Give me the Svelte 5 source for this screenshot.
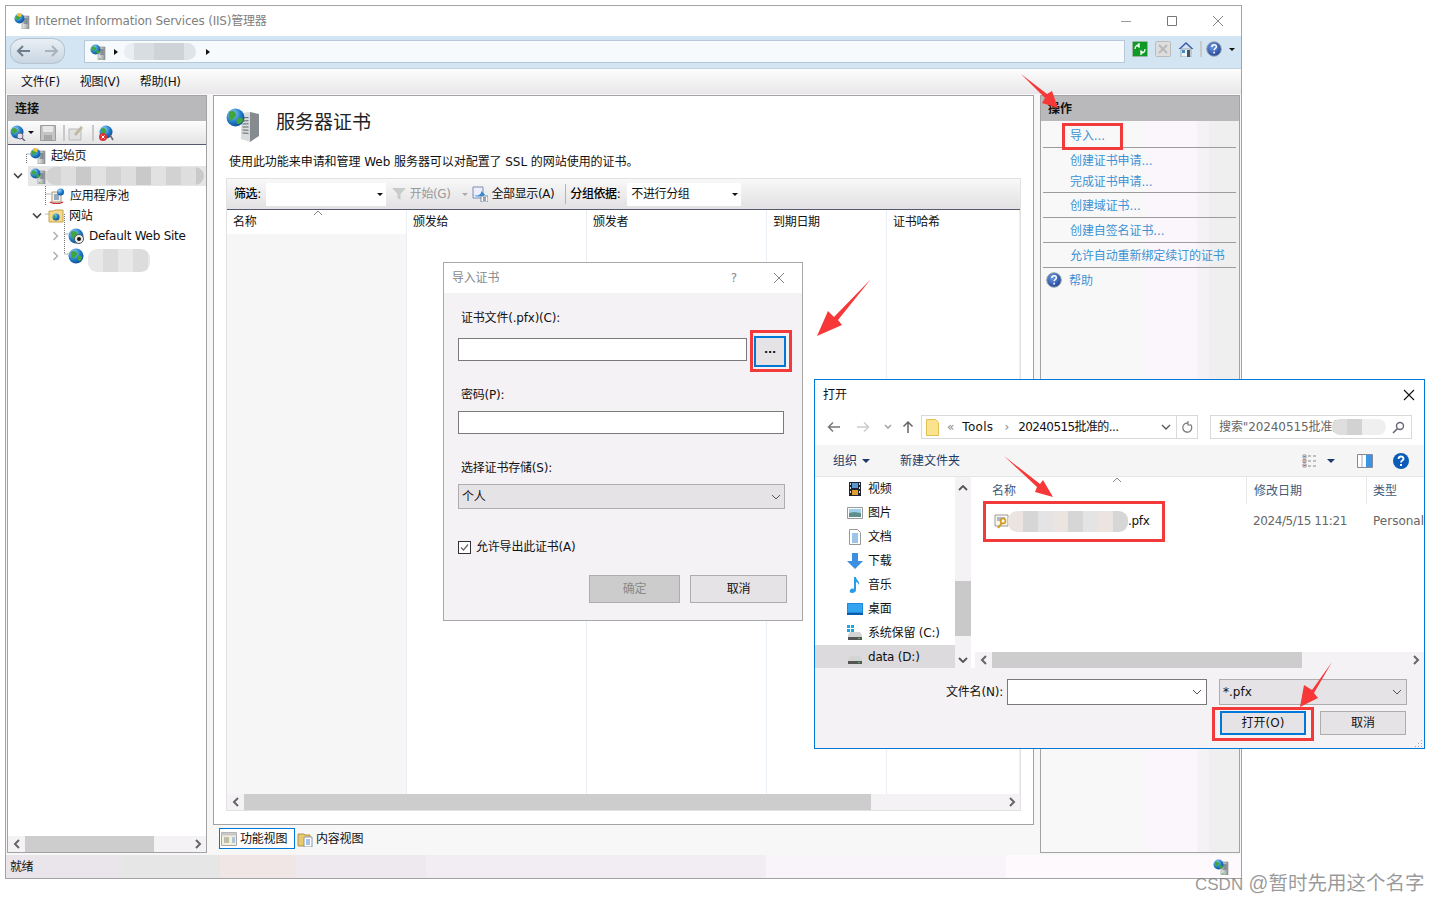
<script>
  const tree = [
    { cls: "l0", icon: "start", label: "起始页" },
    { cls: "l0b", chev: "down", icon: "srv", mask: true, active: true },
    { cls: "l1", icon: "pool", label: "应用程序池" },
    { cls: "l1b", chev: "down", icon: "folder", label: "网站" },
    { cls: "l2", chev: "right", icon: "site", label: "Default Web Site", latin: true },
    { cls: "l2", chev: "right", icon: "globe", mask2: true },
  ];
  const actions = [
    { label: "导入...", cls: "first sep" },
    { label: "创建证书申请...", cls: "second" },
    { label: "完成证书申请...", cls: "third sep" },
    { label: "创建域证书...", cls: "sep" },
    { label: "创建自签名证书...", cls: "sep" },
    { label: "允许自动重新绑定续订的证书", cls: "sep" },
  ];
  const columns = ["名称", "颁发给", "颁发者", "到期日期", "证书哈希"];
  const places = [
    { icon: "video", label: "视频" },
    { icon: "pic", label: "图片" },
    { icon: "doc", label: "文档" },
    { icon: "down", label: "下载" },
    { icon: "music", label: "音乐" },
    { icon: "desk", label: "桌面" },
    { icon: "sysdisk", label: "系统保留 (C:)" },
    { icon: "disk", label: "data (D:)", on: true },
  ];
</script>

{#snippet ic(id, w, h = w)}
  <svg class="ic" width={w} height={h}><use href={"#" + id} /></svg>
{/snippet}

{#snippet chevL()}
  <svg class="ic" width="8" height="10" viewBox="0 0 8 10"><path d="M6 1 2 5l4 4" fill="none" stroke="#666" stroke-width="2" /></svg>
{/snippet}

{#snippet chevR()}
  <svg class="ic" width="8" height="10" viewBox="0 0 8 10"><path d="M2 1l4 4-4 4" fill="none" stroke="#666" stroke-width="2" /></svg>
{/snippet}

{#snippet combo()}
  <svg class="ic" width="10" height="6" viewBox="0 0 10 6"><path d="M1 1l4 4 4-4" fill="none" stroke="#555" stroke-width="1" /></svg>
{/snippet}

<svg class="defs" width="0" height="0">
  <defs>
    <radialGradient id="gb" cx="35%" cy="30%" r="75%"><stop offset="0" stop-color="#9fd4f7" /><stop offset=".6" stop-color="#1f7cc9" /><stop offset="1" stop-color="#0d4c94" /></radialGradient>
    <linearGradient id="gs" x1="0" x2="1"><stop offset="0" stop-color="#eef0f0" /><stop offset="1" stop-color="#8f9598" /></linearGradient>
    <radialGradient id="gh" cx="40%" cy="35%" r="70%"><stop offset="0" stop-color="#6f9be0" /><stop offset="1" stop-color="#1c3f9a" /></radialGradient>
    <symbol id="srv" viewBox="0 0 16 16">
      <path d="M8 3h7v13H8z" fill="url(#gs)" stroke="#888" stroke-width=".6" /><path d="M9.500 6h4M9.500 8h4M9.500 10h4" stroke="#456" stroke-width=".9" /><rect x="9" y="14" width="1.500" height="1.300" fill="#4c4" />
      <circle cx="5.500" cy="5.500" r="5" fill="url(#gb)" /><path d="M2 3c2-1 3 0 4 1s-1 2-2 3-2 0-2-4zM7 6c2 0 3 1 2.500 2.500S8 10 7 9.500 6 7 7 6z" fill="#3fa53c" />
    </symbol>
    <symbol id="bigsrv" viewBox="0 0 34 34">
      <path d="M15 5l9-1v30l-9-3z" fill="#d9dcdc" /><path d="M24 4l9 2v22l-9 6z" fill="#858b8f" />
      <path d="M16.500 10l6-.5M16.500 13l6-.3M16.500 16l6-.2M16.500 19h6M16.500 22l6 .2M16.500 25l6 .3" stroke="#5d666c" />
      <circle cx="9.500" cy="9.500" r="9" fill="url(#gb)" /><path d="M3 4c4-2 6-1 7 2s-3 4-4 6-4 0-3-8zM12 10c3-1 5 0 5 2s-3 4-5 4-2-5 0-6z" fill="#3fa53c" />
    </symbol>
    <symbol id="start" viewBox="0 0 16 16">
      <path d="M8 3h7v13H8z" fill="url(#gs)" stroke="#888" stroke-width=".6" /><path d="M9.500 6h4M9.500 8h4M9.500 10h4" stroke="#456" stroke-width=".9" />
      <circle cx="5.500" cy="5.500" r="5" fill="url(#gb)" /><path d="M2 3c2-1 3 0 4 1s-1 2-2 3-2 0-2-4z" fill="#3fa53c" /><path d="M4 0l4 1-1 3-4-1z" fill="#f2c230" />
    </symbol>
    <symbol id="globe" viewBox="0 0 16 16">
      <circle cx="8" cy="8" r="7.500" fill="url(#gb)" /><path d="M3 4c3-2 5-1 6 1s-2 3-3 5-3 0-3-6zM10 8c2-1 4 0 4 2s-2 3-3 3-2-4-1-5z" fill="#3fa53c" />
    </symbol>
    <symbol id="site" viewBox="0 0 16 16">
      <circle cx="8" cy="8" r="7.500" fill="url(#gb)" /><path d="M3 4c3-2 5-1 6 1s-2 3-3 5-3 0-3-6z" fill="#3fa53c" /><circle cx="11" cy="11" r="4.500" fill="#eee" stroke="#555" /><circle cx="11" cy="11" r="2" fill="#111" />
    </symbol>
    <symbol id="pool" viewBox="0 0 16 16">
      <path d="M1 14c3 2 10 2 13 0" fill="none" stroke="#c33" stroke-width="1.500" /><path d="M3 4h9v10H3z" fill="#f6f0dc" stroke="#a98" /><path d="M5 7h5M5 9h5M5 11h5" stroke="#36a" /><circle cx="11.500" cy="4" r="3.500" fill="url(#gb)" />
    </symbol>
    <symbol id="folder" viewBox="0 0 16 16">
      <path d="M1 3h5l1-1h8v12H1z" fill="#f4d98a" stroke="#c9a24a" /><circle cx="8" cy="9" r="3.500" fill="url(#gb)" /><path d="M6 7c2 0 2 2 1 3s-2-1-1-3z" fill="#3fa53c" />
    </symbol>
    <symbol id="conn" viewBox="0 0 16 16">
      <circle cx="7" cy="7" r="6.500" fill="url(#gb)" /><path d="M2 4c3-2 4-1 5 1s-2 3-3 4-2-1-2-5z" fill="#3fa53c" /><circle cx="10" cy="11" r="3" fill="#dde" stroke="#667" /><path d="M12 13l3 3" stroke="#667" stroke-width="1.500" />
    </symbol>
    <symbol id="disc" viewBox="0 0 16 16">
      <circle cx="8" cy="7" r="6.500" fill="url(#gb)" /><path d="M3 4c3-2 4-1 5 1s-2 3-3 4-2-1-2-5z" fill="#3fa53c" /><path d="M12 10l3 5" stroke="#667" stroke-width="1.500" /><circle cx="5" cy="12" r="4" fill="#d33" /><path d="M3.500 10.500l3 3m0-3l-3 3" stroke="#fff" />
    </symbol>
    <symbol id="save" viewBox="0 0 16 16">
      <path d="M.5.500h15v15H.5z" fill="#c4c4c4" stroke="#9b9b9b" /><path d="M3 1h10v6H3z" fill="#e8e8e8" /><path d="M4 10h8v5H4z" fill="#a9a9a9" />
    </symbol>
    <symbol id="edit" viewBox="0 0 16 16">
      <path d="M1 4h12v11H1z" fill="#e0e0e0" stroke="#bbb" /><path d="M6 9l7-8 2 2-7 8z" fill="#c2b8a0" />
    </symbol>
    <symbol id="help" viewBox="0 0 16 16">
      <circle cx="8" cy="8" r="7.300" fill="url(#gh)" stroke="#9aa" stroke-width="1" /><path d="M5.800 6c0-3 4.600-3 4.600-.3 0 1.800-2.300 1.800-2.300 3.600" fill="none" stroke="#fff" stroke-width="1.500" /><rect x="7.300" y="10.800" width="1.600" height="1.700" fill="#fff" />
    </symbol>
    <symbol id="refresh" viewBox="0 0 16 16">
      <rect x=".5" y=".5" width="15" height="15" rx="1" fill="#0f9a26" stroke="#9ab5a0" /><path d="M3 8c0-3 2-4 4-4M7 2v4L4.500 4M13 8c0 3-2 4-4 4M9 14v-4l2.500 2" fill="none" stroke="#fff" stroke-width="1.300" />
    </symbol>
    <symbol id="stop" viewBox="0 0 16 16">
      <rect x=".5" y=".5" width="15" height="15" rx="1" fill="#ddd" stroke="#bbb" /><path d="M4 4l8 8m0-8l-8 8" stroke="#b9b9b9" stroke-width="2" />
    </symbol>
    <symbol id="home" viewBox="0 0 16 16">
      <path d="M3 8h10v8H3z" fill="#f0f2f5" stroke="#9aa" /><path d="M8 1 .5 8h2L8 3l5.500 5h2z" fill="#3a5da8" /><rect x="9" y="9" width="3" height="7" fill="#456" /><rect x="4" y="9" width="3" height="3" fill="#48c" />
    </symbol>
    <symbol id="funnel" viewBox="0 0 14 14">
      <path d="M0 1h14L8.500 7v6l-3-2V7z" fill="#c7ccc9" />
    </symbol>
    <symbol id="showall" viewBox="0 0 16 16">
      <path d="M1 1h10v11H1z" fill="#eef" stroke="#7a8fb0" /><path d="M1 9c3 1 6 1 8-2v-2l4 3.500-4 3.500v-2c-3 1-6 1-8-2z" fill="#2e8bd6" /><path d="M9 10h7v6H9z" fill="#fff" stroke="#789" /><path d="M11 12h3m-3 2h3" stroke="#345" />
    </symbol>
    <symbol id="fview" viewBox="0 0 16 16">
      <path d="M.5 1.500h15v13H.5z" fill="#f3efdd" stroke="#a6a6a6" /><path d="M.5 1.500h15v3H.5z" fill="#c8c8c8" /><path d="M3 7h5M3 9h5M3 11h5" stroke="#8a8a78" /><path d="M11 7h3m-3 2h3m-3 2h3" stroke="#6a9bd0" />
    </symbol>
    <symbol id="cview" viewBox="0 0 16 16">
      <path d="M1 3h6l1 1h5v11H1z" fill="#e9c86e" stroke="#b39545" /><path d="M7 6h8v10H7z" fill="#fff" stroke="#8a98a8" /><path d="M9 9h4m-4 2h4m-4 2h4" stroke="#4b8ad0" />
    </symbol>
    <symbol id="video" viewBox="0 0 16 16"><path d="M2 1h12v14H2z" fill="#223" /><path d="M5 2h6v5H5z" fill="#5a9ad0" /><path d="M5 9h6v5H5z" fill="#e0a030" /><path d="M3 2h1v2H3zm0 4h1v2H3zm0 4h1v2H3zm9-8h1v2h-1zm0 4h1v2h-1zm0 4h1v2h-1z" fill="#ddd" /></symbol>
    <symbol id="pic" viewBox="0 0 16 16"><path d="M.5 2.500h15v11H.5z" fill="#fff" stroke="#999" /><path d="M2 4h12v4H2z" fill="#9fd0ea" /><path d="M2 8l5-1 7 1v4H2z" fill="#5c8f8a" /></symbol>
    <symbol id="doc" viewBox="0 0 16 16"><path d="M2.500.5h8l3 3v12h-11z" fill="#fff" stroke="#999" /><path d="M5 5h6M5 7h6M5 9h6M5 11h6M5 13h6" stroke="#3a8ad4" /></symbol>
    <symbol id="down" viewBox="0 0 16 16"><path d="M5 0h6v8h5l-8 8-8-8h5z" fill="#3b8ee0" /></symbol>
    <symbol id="music" viewBox="0 0 16 16"><path d="M7 0h2c0 3 4 4 3 8-1-2-2-3-3-3v8c0 2-2 3-4 3s-3-2-2-3 2-2 4-1z" fill="#2a9be8" /></symbol>
    <symbol id="desk" viewBox="0 0 16 16"><path d="M0 2h16v12H0z" fill="#1e88dc" /><path d="M0 12h16v2H0z" fill="#0b5ea8" /><path d="M1 3h14v8H1z" fill="#33a4f0" /></symbol>
    <symbol id="sysdisk" viewBox="0 0 16 16"><path d="M0 0h3v3H0zm4 0h3v3H4zM0 4h3v3H0zm4 0h3v3H4z" fill="#18a8e8" /><path d="M1 10l2-3h10l2 3v5H1z" fill="#d4d4d4" /><path d="M1 12h14v3H1z" fill="#555" /><path d="M11 13h2v1h-2z" fill="#4c4" /></symbol>
    <symbol id="disk" viewBox="0 0 16 16"><path d="M1 10l2-3h10l2 3v5H1z" fill="#d4d4d4" /><path d="M1 12h14v3H1z" fill="#555" /><path d="M11 13h2v1h-2z" fill="#4c4" /></symbol>
    <symbol id="cert" viewBox="0 0 16 16"><path d="M1 2h13v11H1z" fill="#faf6ea" stroke="#999" /><path d="M3 5h8M3 7h5" stroke="#5a7fc0" /><circle cx="9" cy="8" r="2.500" fill="none" stroke="#d09a20" stroke-width="1.500" /><path d="M8 10l-4 5" stroke="#d09a20" stroke-width="2" /></symbol>
    <symbol id="views" viewBox="0 0 16 16"><path d="M1 2h3v3H1zm0 4.500h3v3H1zM1 11h3v3H1z" fill="#fff" stroke="#999" /><path d="M1.500 3h2v1h-2z" fill="#48c" /><path d="M1.500 7.500h2v1h-2z" fill="#d44" /><path d="M1.500 12h2v1h-2z" fill="#d44" /><path d="M6 3h3m2 0h3M6 8h3m2 0h3M6 13h3m2 0h3" stroke="#888" /></symbol>
    <symbol id="pane" viewBox="0 0 16 14"><path d="M.5.500h15v13H.5z" fill="#fff" stroke="#889" /><path d="M9 1h6v12H9z" fill="#3a96e4" /><path d="M5 1v12" stroke="#aab" /></symbol>
    <symbol id="bluehelp" viewBox="0 0 16 16"><circle cx="8" cy="8" r="8" fill="#0a5cb8" /><path d="M5.500 6c0-3.300 5-3.300 5-.3 0 2-2.500 1.800-2.500 3.800" fill="none" stroke="#fff" stroke-width="1.800" /><rect x="7" y="11" width="2" height="2" fill="#fff" /></symbol>
  </defs>
</svg>

<div class="page">
  <div class="win">
    <div class="title">
      {@render ic("start", 16)}
      <span>Internet Information Services (IIS)管理器</span>
      <div class="caption">
        <svg class="ic" width="12" height="12" viewBox="0 0 12 12"><path d="M1 6.500h10" stroke="#999" /></svg>
        <svg class="ic" width="12" height="12" viewBox="0 0 12 12"><path d="M1.500 1.500h9v9h-9z" fill="none" stroke="#777" /></svg>
        <svg class="ic" width="12" height="12" viewBox="0 0 12 12"><path d="M1 1l10 10m0-10L1 11" stroke="#888" /></svg>
      </div>
    </div>

    <div class="addr">
      <div class="navpill">
        <svg class="ic" width="16" height="14" viewBox="0 0 16 14"><path d="M15 7H3m5-5L3 7l5 5" fill="none" stroke="#6f7f8d" stroke-width="2" /></svg>
        <svg class="ic" width="16" height="14" viewBox="0 0 16 14"><path d="M1 7h12M8 2l5 5-5 5" fill="none" stroke="#a8b3bc" stroke-width="2" /></svg>
      </div>
      <div class="addrbox">
        {@render ic("srv", 16)}
        <span class="tri"></span>
        <span class="mask addrmask"></span>
        <span class="tri"></span>
      </div>
      <div class="addrbtns">
        {@render ic("refresh", 16)}
        {@render ic("stop", 16)}
        {@render ic("home", 16)}
        <span class="vsep"></span>
        {@render ic("help", 16)}
        <span class="caret"></span>
      </div>
    </div>

    <div class="menu">
      <span>文件(F)</span><span>视图(V)</span><span>帮助(H)</span>
    </div>

    <div class="main">
      <div class="panel">
        <div class="phead">连接</div>
        <div class="ptools">
          {@render ic("conn", 16)}
          <span class="caret"></span>
          {@render ic("save", 16)}
          <span class="vsep"></span>
          {@render ic("edit", 16)}
          <span class="vsep s2"></span>
          {@render ic("disc", 16)}
        </div>
        <div class="tree">
          <svg class="treelines" width="60" height="120"><path d="M12.500 8v10M12.500 8h8M31.500 28v32M31.500 48h8M31.500 68h4M50.500 68v40M50.500 88h6M50.500 108h6" fill="none" stroke="#777" stroke-dasharray="1 1" /></svg>
          {#each tree as row}
            <div class="row {row.cls}" class:active={row.active}>
              <span class="chev">
                {#if row.chev === "down"}
                  <svg class="ic" width="10" height="8" viewBox="0 0 10 8"><path d="M1 1.500l4 4 4-4" fill="none" stroke="#444" stroke-width="1.600" /></svg>
                {:else if row.chev === "right"}
                  <svg class="ic" width="8" height="10" viewBox="0 0 8 10"><path d="M1.500 1l4 4-4 4" fill="none" stroke="#aaa" stroke-width="1.300" /></svg>
                {/if}
              </span>
              {@render ic(row.icon, 16)}
              {#if row.label}<span class="rowlabel">{row.label}</span>{/if}
              {#if row.mask}<span class="mask srvmask"></span>{/if}
              {#if row.mask2}<span class="mask sitemask"></span>{/if}
            </div>
          {/each}
        </div>
        <div class="hscroll">
          <span class="sbtn">{@render chevL()}</span>
          <span class="thumb leftthumb"></span>
          <span class="sbtn end">{@render chevR()}</span>
        </div>
      </div>

      <div class="center">
        <div class="cpanel">
          <div class="chead">
            {@render ic("bigsrv", 34)}
            <h1>服务器证书</h1>
          </div>
          <p class="desc">使用此功能来申请和管理 Web 服务器可以对配置了 SSL 的网站使用的证书。</p>
          <div class="listbox">
            <div class="filter">
              <span class="flabel">筛选:</span>
              <span class="fcombo w120"><span class="caret"></span></span>
              {@render ic("funnel", 14)}
              <span class="muted">开始(G)</span>
              <span class="caret light"></span>
              {@render ic("showall", 16)}
              <span>全部显示(A)</span>
              <span class="vsep tall"></span>
              <span class="flabel">分组依据:</span>
              <span class="fcombo w114">不进行分组<span class="caret"></span></span>
            </div>
            <div class="table">
              {#each columns as c, i}
                <div class="col">
                  <div class="colhead">{c}{#if i === 0}<svg class="sort" width="10" height="6" viewBox="0 0 10 6"><path d="M1 5l4-4 4 4" fill="none" stroke="#888" /></svg>{/if}</div>
                  <div class="colbody" class:first={i === 0}></div>
                </div>
              {/each}
            </div>
            <div class="hscroll">
              <span class="sbtn">{@render chevL()}</span>
              <span class="thumb listthumb"></span>
              <span class="sbtn end">{@render chevR()}</span>
            </div>
          </div>
        </div>
        <div class="tabs">
          <span class="tab on">{@render ic("fview", 16)}功能视图</span>
          <span class="tab">{@render ic("cview", 16)}内容视图</span>
        </div>
      </div>

      <div class="panel actions">
        <div class="phead">操作</div>
        <div class="alist">
          {#each actions as a}
            <div class="aitem {a.cls}"><span class="atext">{a.label}</span></div>
          {/each}
          <div class="aitem helprow">{@render ic("help", 16)}<span class="atext">帮助</span></div>
        </div>
      </div>
    </div>

    <div class="status">
      <span>就绪</span>
      {@render ic("srv", 16)}
    </div>
  </div>

  <!-- 导入证书 dialog -->
  <div class="dlg import">
    <div class="dlgtitle">
      <span>导入证书</span>
      <span class="q">?</span>
      <svg class="ic" width="12" height="12" viewBox="0 0 12 12"><path d="M1 1l10 10m0-10L1 11" stroke="#888" /></svg>
    </div>
    <div class="dlgbody">
      <div class="lbl">证书文件(.pfx)(C):</div>
      <div class="fileline">
        <span class="inp grow"></span>
        <span class="browse">...</span>
      </div>
      <div class="lbl pw">密码(P):</div>
      <span class="inp pwinp"></span>
      <div class="lbl store">选择证书存储(S):</div>
      <div class="sel">个人{@render combo()}</div>
      <div class="check">
        <span class="box"><svg class="ic" width="11" height="11" viewBox="0 0 11 11"><path d="M2 5.500l2.500 2.500L9 2.500" fill="none" stroke="#666" stroke-width="1.200" /></svg></span>
        允许导出此证书(A)
      </div>
      <div class="btns">
        <span class="btn disabled">确定</span>
        <span class="btn cancel">取消</span>
      </div>
    </div>
  </div>

  <!-- 打开 file dialog -->
  <div class="dlg open">
    <div class="otitle">
      <span>打开</span>
      <svg class="ic" width="12" height="12" viewBox="0 0 12 12"><path d="M1 1l10 10m0-10L1 11" stroke="#111" stroke-width="1.100" /></svg>
    </div>
    <div class="onav">
      <svg class="ic" width="14" height="12" viewBox="0 0 14 12"><path d="M13 6H2m4-4.500L1.500 6 6 10.500" fill="none" stroke="#777" stroke-width="1.500" /></svg>
      <svg class="ic navf" width="14" height="12" viewBox="0 0 14 12"><path d="M1 6h11M8 1.500 12.500 6 8 10.500" fill="none" stroke="#ccc" stroke-width="1.500" /></svg>
      <svg class="ic navd" width="8" height="6" viewBox="0 0 8 6"><path d="M1 1l3 3 3-3" fill="none" stroke="#999" stroke-width="1.300" /></svg>
      <svg class="ic navu" width="12" height="14" viewBox="0 0 12 14"><path d="M6 13V2M1.500 6.500 6 2l4.500 4.500" fill="none" stroke="#666" stroke-width="1.500" /></svg>
      <div class="crumb">
        <svg class="ic" width="13" height="17" viewBox="0 0 13 17"><path d="M.5.500h9l3 3v13h-12z" fill="#fbe38e" stroke="#e0c050" /></svg>
        <span class="gray">«</span>
        <span class="tools">Tools</span>
        <span class="gray sepch">›</span>
        <span class="dir">20240515批准的...</span>
        <span class="spacer"></span>
        <svg class="ic" width="10" height="6" viewBox="0 0 10 6"><path d="M1 1l4 4 4-4" fill="none" stroke="#555" stroke-width="1.300" /></svg>
      </div>
      <div class="reload">
        <svg class="ic" width="12" height="13" viewBox="0 0 12 13"><path d="M9.500 3.500a4.500 4.500 0 1 1-2.500-1.300M7 0v4h3" fill="none" stroke="#777" stroke-width="1.200" /></svg>
      </div>
      <div class="search">
        <span>搜索"20240515批准的</span>
        <span class="mask searchmask"></span>
        <svg class="ic" width="13" height="13" viewBox="0 0 13 13"><circle cx="8" cy="5" r="3.500" fill="none" stroke="#667" stroke-width="1.400" /><path d="M5.500 7.500 1 12" stroke="#667" stroke-width="1.600" /></svg>
      </div>
    </div>
    <div class="otools">
      <span class="org">组织</span><span class="caret navy"></span>
      <span class="newf">新建文件夹</span>
      <span class="spacer"></span>
      {@render ic("views", 16)}
      <span class="caret navy v"></span>
      <svg class="ic pane" width="16" height="14"><use href="#pane" /></svg>
      {@render ic("bluehelp", 16)}
    </div>
    <div class="panes">
      <div class="places">
        {#each places as p}
          <div class="place" class:on={p.on}>{@render ic(p.icon, 16)}<span>{p.label}</span></div>
        {/each}
      </div>
      <div class="vscroll">
        <svg class="ic" width="10" height="6" viewBox="0 0 10 6"><path d="M1 5l4-4 4 4" fill="none" stroke="#555" stroke-width="1.800" /></svg>
        <span class="vthumb"></span>
        <svg class="ic" width="10" height="6" viewBox="0 0 10 6"><path d="M1 1l4 4 4-4" fill="none" stroke="#555" stroke-width="1.800" /></svg>
      </div>
      <div class="files">
        <div class="fhead">
          <span class="fname">名称<svg class="sort2" width="10" height="6" viewBox="0 0 10 6"><path d="M1 5l4-4 4 4" fill="none" stroke="#888" /></svg></span>
          <span class="fdate">修改日期</span>
          <span class="ftype">类型</span>
        </div>
        <div class="frow">
          <span class="fname">{@render ic("cert", 16)}<span class="mask filemask"></span><span class="pfx">.pfx</span></span>
          <span class="fdate val">2024/5/15 11:21</span>
          <span class="ftype val">Personal</span>
        </div>
        <div class="spacer"></div>
        <div class="hscroll fscroll">
          <span class="sbtn">{@render chevL()}</span>
          <span class="thumb filethumb"></span>
          <span class="sbtn end">{@render chevR()}</span>
        </div>
      </div>
    </div>
    <div class="obottom">
      <div class="oline">
        <span class="fnlabel">文件名(N):</span>
        <div class="fninp">{@render combo()}</div>
        <div class="ftsel"><span>*.pfx</span>{@render combo()}</div>
      </div>
      <div class="oline btnline">
        <span class="obtn primary">打开(O)</span>
        <span class="obtn">取消</span>
      </div>
      <svg class="grip" width="10" height="8" viewBox="0 0 10 8"><path d="M8 0h1v1H8zM5 3h1v1H5zm3 0h1v1H8zM2 6h1v1H2zm3 0h1v1H5zm3 0h1v1H8z" fill="#aaa" /></svg>
    </div>
  </div>

  <!-- red annotations -->
  <svg class="arrows" width="1441" height="901">
    <path d="M1021 74 1047 94 1052 91 1058 108 1042 103 1045 98z" />
    <path d="M871 279 834 317 828 311 817 336 842 325 838 320z" />
    <path d="M1004 456 1040 484 1043 480 1053 497 1035 492 1037 487z" />
    <path d="M1332 662 1312 690 1304 685 1300 707 1318 698 1314 693z" />
  </svg>
  <span class="redbox r1"></span>
  <span class="redbox r2"></span>
  <span class="redbox r3"></span>
  <span class="redbox r4"></span>

  <div class="mark"><span class="csdn">CSDN</span> @暂时先用这个名字</div>
</div>

<style>
  :global(body) {
    margin: 0;
    background: #fff;
  }
  .defs {
    position: absolute;
  }
  .ic {
    display: block;
    flex: none;
  }
  .page {
    position: relative;
    width: 1441px;
    height: 901px;
    overflow: hidden;
    padding: 5px 0 0 5px;
    box-sizing: border-box;
    font: 12px/16px "DejaVu Sans", "Noto Sans CJK SC", sans-serif;
    color: #111;
  }
  .win {
    width: 1237px;
    height: 874px;
    box-sizing: border-box;
    border: 1px solid #a3a3a3;
    display: flex;
    flex-direction: column;
    background: #f7f7f7;
  }
  .spacer {
    flex: 1;
  }

  .title {
    height: 30px;
    flex: none;
    background: #fff;
    display: flex;
    align-items: center;
    padding-left: 8px;
    gap: 5px;
    color: #808080;
    letter-spacing: -0.2px;
  }
  .caption {
    margin-left: auto;
    display: flex;
    gap: 34px;
    padding-right: 17px;
  }

  .addr {
    height: 33px;
    flex: none;
    background: #d3e4f3;
    display: flex;
    align-items: flex-start;
    border-bottom: 1px solid #c4d2de;
    box-sizing: border-box;
  }
  .navpill {
    width: 55px;
    height: 26px;
    margin: 2px 0 0 4px;
    border-radius: 13px / 11px;
    border: 1px solid #b6c4d0;
    box-sizing: border-box;
    background: linear-gradient(#e9eff5, #c9d6e2);
    display: flex;
    align-items: center;
    justify-content: space-between;
    padding: 0 4px;
  }
  .addrbox {
    width: 1041px;
    height: 23px;
    margin: 4px 0 0 19px;
    box-sizing: border-box;
    border: 1px solid #b7c9d9;
    background: #f6fafd;
    display: flex;
    align-items: center;
    padding-left: 5px;
    gap: 8px;
  }
  .tri {
    width: 0;
    height: 0;
    border-left: 4px solid #111;
    border-top: 3.500px solid transparent;
    border-bottom: 3.500px solid transparent;
  }
  .addrbtns {
    display: flex;
    align-items: center;
    gap: 7px;
    margin: 5px 0 0 7px;
  }
  .addrbtns .vsep {
    margin: 0 -3px 0 -1px;
  }
  .caret {
    width: 0;
    height: 0;
    border-top: 3px solid #111;
    border-left: 3px solid transparent;
    border-right: 3px solid transparent;
    flex: none;
  }
  .caret.light {
    border-top-color: #aaa;
  }
  .caret.navy {
    border-top: 4px solid #1d3a6a;
    border-left-width: 4px;
    border-right-width: 4px;
  }
  .vsep {
    width: 2px;
    height: 16px;
    background: #c9c9c9;
    flex: none;
  }

  .menu {
    height: 25px;
    flex: none;
    background: linear-gradient(#fdfdfd, #e9e7e9);
    display: flex;
    align-items: center;
    gap: 20px;
    padding-left: 15px;
    letter-spacing: -0.3px;
  }

  .main {
    flex: 1;
    min-height: 0;
    display: grid;
    grid-template-columns: 200px 821px 200px;
    gap: 6px;
    padding: 1px 1px 2px;
  }
  .panel {
    border: 1px solid #a3a3a3;
    background: #fff;
    display: flex;
    flex-direction: column;
    min-height: 0;
  }
  .phead {
    height: 25px;
    flex: none;
    background: #b9b8ba;
    display: flex;
    align-items: center;
    padding-left: 7px;
    font-weight: 700;
  }
  .ptools {
    height: 23px;
    flex: none;
    background: linear-gradient(#fdfdfd, #e4e4e4);
    border-bottom: 1px solid #555a70;
    display: flex;
    align-items: center;
    padding-left: 2px;
  }
  .ptools .caret {
    margin: 0 6px 0 2px;
  }
  .ptools .vsep {
    margin: 0 3px 0 7px;
  }
  .ptools .vsep.s2 {
    margin: 0 4px 0 8px;
  }
  .tree {
    position: relative;
    flex: 1;
    padding-top: 1px;
  }
  .treelines {
    position: absolute;
    left: 6px;
    top: 1px;
  }
  .row {
    position: relative;
    height: 20px;
    display: flex;
    align-items: center;
  }
  .chev {
    width: 14px;
    flex: none;
    display: flex;
    justify-content: center;
  }
  .rowlabel {
    margin-left: 5px;
    letter-spacing: -0.2px;
  }
  .row.active {
    background: linear-gradient(90deg, #fff 0 20px, #e6e6e6 20px);
  }
  .l0 {
    padding-left: 8px;
  }
  .l0b {
    padding-left: 3px;
  }
  .l0b .chev {
    margin-right: 5px;
  }
  .l1 {
    padding-left: 27px;
  }
  .l1b {
    padding-left: 22px;
  }
  .l1b .chev {
    margin-right: 4px;
  }
  .l2 {
    padding-left: 41px;
  }
  .l2 .chev {
    margin-right: 5px;
  }
  .l2 .rowlabel {
    letter-spacing: -0.25px;
  }

  .mask {
    display: block;
    background: repeating-linear-gradient(90deg, #d2d2d2 0 15px, #dedede 15px 30px, #c9c9c9 30px 45px, #e2e2e2 45px 60px);
    border-radius: 9px;
    flex: none;
  }
  .addrmask {
    width: 72px;
    height: 17px;
    margin: 0 2px 0 -2px;
    background: linear-gradient(90deg, #e9eef2 0 10px, #d8dde2 10px 30px, #ced3d8 30px 60px, #dfe4e8 60px);
  }
  .srvmask {
    width: 158px;
    height: 18px;
    margin-left: 0;
  }
  .sitemask {
    width: 62px;
    height: 23px;
    margin-left: 4px;
    position: relative;
    top: 4px;
    background: repeating-linear-gradient(90deg, #e8e8e8 0 15px, #dcdcdc 15px 30px);
  }
  .searchmask {
    width: 54px;
    height: 16px;
    margin-left: -12px;
    position: relative;
    background: linear-gradient(90deg, #dedede 0 15px, #d2d2d2 15px 30px, #efefef 30px);
  }
  .filemask {
    width: 120px;
    height: 21px;
    margin-left: -2px;
    background: repeating-linear-gradient(90deg, #ece4e0 0 15px, #d6d6d6 15px 30px, #e4e4e4 30px 45px);
  }

  .hscroll {
    height: 16px;
    flex: none;
    display: flex;
    align-items: center;
    background: #f5f2f6;
  }
  .sbtn {
    width: 17px;
    flex: none;
    display: flex;
    justify-content: center;
  }
  .sbtn.end {
    margin-left: auto;
  }
  .thumb {
    height: 16px;
    background: #cdcdcd;
    flex: none;
  }
  .leftthumb {
    width: 129px;
  }
  .listthumb {
    width: 627px;
  }
  .filethumb {
    width: 310px;
  }

  .center {
    display: flex;
    flex-direction: column;
    min-height: 0;
  }
  .cpanel {
    height: 730px;
    box-sizing: border-box;
    flex: none;
    background: #fff;
    border: 1px solid #a3a3a3;
    padding: 12px 12px 13px;
    display: flex;
    flex-direction: column;
  }
  .chead {
    display: flex;
    align-items: flex-start;
    height: 34px;
    gap: 16px;
    flex: none;
  }
  h1 {
    margin: 0;
    font-size: 19px;
    line-height: 25px;
    font-weight: 400;
    font-family: "Noto Sans CJK SC", sans-serif;
    color: #222;
  }
  .desc {
    margin: 12px 0 8px 3px;
    height: 16px;
    letter-spacing: -0.05px;
  }
  .listbox {
    flex: 1;
    min-height: 0;
    border: 1px solid #e2e2e2;
    display: flex;
    flex-direction: column;
  }
  .filter {
    height: 31px;
    flex: none;
    box-sizing: border-box;
    border-bottom: 1px solid #555a70;
    background: linear-gradient(#f8f8f8, #e3e1e3);
    display: flex;
    align-items: center;
    padding-left: 7px;
    gap: 4px;
    letter-spacing: -0.4px;
  }
  .flabel {
    font-weight: 500;
    color: #000;
  }
  .fcombo {
    height: 23px;
    background: #fff;
    display: flex;
    align-items: center;
    justify-content: space-between;
    box-sizing: border-box;
    padding: 0 3px 0 4px;
    flex: none;
  }
  .w120 {
    width: 120px;
    margin-left: 1px;
    margin-right: 2px;
    justify-content: flex-end;
  }
  .w114 {
    width: 114px;
    margin-left: 3px;
  }
  .muted {
    color: #999;
    margin-right: 7px;
  }
  .tall {
    height: 20px;
    width: 1px;
    background: #b8b4a8;
    margin: 0 0 0 7px;
  }
  .table {
    flex: 1;
    min-height: 0;
    display: grid;
    grid-template-columns: 180px 180px 180px 120px 1fr;
    background: #fff;
  }
  .col {
    display: flex;
    flex-direction: column;
    border-right: 1px solid #eaeff5;
    box-sizing: border-box;
    position: relative;
  }
  .colhead {
    height: 24px;
    padding: 4px 0 0 6px;
    box-sizing: border-box;
    flex: none;
    letter-spacing: -0.3px;
  }
  .sort {
    position: absolute;
    left: 86px;
    top: 0;
  }
  .colbody {
    flex: 1;
  }
  .colbody.first {
    background: #f6f6f6;
  }
  .tabs {
    flex: 1;
    display: flex;
    align-items: flex-start;
    padding: 3px 0 0 6px;
  }
  .tab {
    height: 21px;
    box-sizing: border-box;
    border: 1px solid transparent;
    display: flex;
    align-items: center;
    padding: 0 1px;
    gap: 3px;
    letter-spacing: -0.2px;
  }
  .tab.on {
    border-color: #0078d7;
    background: #fff;
    width: 76px;
  }

  .actions {
    background: linear-gradient(90deg, #f9f8f9 0 106px, #fbf6fb 106px 156px, #f5f2f6 156px 168px, #efefef 168px);
  }
  .alist {
    padding: 4px 3px 0 2px;
  }
  .aitem {
    height: 25px;
    box-sizing: border-box;
    display: flex;
    align-items: center;
    padding-left: 27px;
    color: #3b93d4;
    letter-spacing: -0.1px;
  }
  .atext {
    position: relative;
    top: 1px;
  }
  .aitem.sep {
    border-bottom: 1px solid #9c9c9c;
  }
  .aitem.first {
    height: 23px;
    padding-bottom: 2px;
  }
  .aitem.second {
    height: 24px;
  }
  .aitem.third {
    height: 21px;
    padding-bottom: 2px;
  }
  .helprow {
    height: 24px;
    padding-left: 3px;
    gap: 7px;
  }

  .status {
    height: 23px;
    flex: none;
    background: linear-gradient(90deg, #eae5ea 0 116px, #e6e6e6 116px 214px, #f0e6e6 214px 290px, #eee9ee 290px 420px, #f2edf2 420px 760px, #f9f4f9 760px 1000px, #fdf9fd 1000px);
    display: flex;
    align-items: center;
    justify-content: space-between;
    padding: 0 12px 0 4px;
    letter-spacing: -0.4px;
  }

  .dlg {
    position: absolute;
    box-sizing: border-box;
    display: flex;
    flex-direction: column;
  }
  .import {
    left: 443px;
    top: 262px;
    width: 360px;
    height: 359px;
    border: 1px solid #a8a8a8;
    background: #f5f2f6;
  }
  .dlgtitle {
    height: 30px;
    flex: none;
    background: #fff;
    display: flex;
    align-items: center;
    padding: 0 17px 0 8px;
    color: #8a8a8a;
    letter-spacing: -0.2px;
  }
  .q {
    margin-left: auto;
    margin-right: 36px;
  }
  .dlgbody {
    flex: 1;
    display: flex;
    flex-direction: column;
    padding: 17px 17px 0 14px;
    letter-spacing: -0.2px;
  }
  .lbl {
    padding-left: 3px;
    height: 16px;
    flex: none;
  }
  .fileline {
    display: flex;
    align-items: flex-start;
    margin-top: 10px;
    height: 31px;
    margin-right: -1px;
    flex: none;
  }
  .inp {
    display: block;
    height: 23px;
    box-sizing: border-box;
    background: #fff;
    border: 1px solid #7a7a7a;
    flex: none;
  }
  .grow {
    flex: 1;
    margin-top: 2px;
  }
  .browse {
    width: 32px;
    height: 31px;
    box-sizing: border-box;
    margin-left: 7px;
    border: 2px solid #0078d7;
    background: #e6e3e7;
    display: flex;
    align-items: center;
    justify-content: center;
    font-weight: 700;
    font-size: 11px;
    padding-bottom: 3px;
    flex: none;
  }
  .lbl.pw {
    margin-top: 20px;
  }
  .pwinp {
    margin: 8px 1px 0 0;
  }
  .lbl.store {
    margin-top: 26px;
  }
  .sel {
    margin-top: 8px;
    height: 25px;
    box-sizing: border-box;
    border: 1px solid #adadad;
    background: #e6e3e7;
    display: flex;
    align-items: center;
    justify-content: space-between;
    padding: 0 3px 0 3px;
    flex: none;
  }
  .check {
    margin-top: 30px;
    height: 16px;
    display: flex;
    align-items: center;
    gap: 5px;
    flex: none;
  }
  .box {
    width: 13px;
    height: 13px;
    box-sizing: border-box;
    border: 1px solid #333;
    background: #fff;
    display: block;
  }
  .btns {
    display: flex;
    justify-content: flex-end;
    gap: 10px;
    margin: 20px -2px 0 0;
  }
  .btn {
    height: 28px;
    box-sizing: border-box;
    border: 1px solid #adadad;
    background: #e6e3e7;
    display: flex;
    align-items: center;
    justify-content: center;
    flex: none;
  }
  .btn.disabled {
    width: 91px;
    background: #cccccc;
    color: #8a8a8a;
  }
  .btn.cancel {
    width: 97px;
  }

  .open {
    left: 814px;
    top: 379px;
    width: 611px;
    height: 370px;
    border: 1px solid #0078d7;
    background: #fff;
  }
  .otitle {
    height: 29px;
    flex: none;
    display: flex;
    align-items: center;
    justify-content: space-between;
    padding: 0 9px 0 8px;
  }
  .onav {
    height: 36px;
    flex: none;
    display: flex;
    align-items: flex-start;
    padding: 6px 0 0 12px;
    box-sizing: border-box;
  }
  .onav > svg {
    margin-top: 6px;
  }
  .navf {
    margin-left: 15px;
  }
  .navd {
    margin-left: 14px;
    margin-top: 9px !important;
  }
  .navu {
    margin-left: 10px;
    margin-top: 5px !important;
  }
  .crumb {
    width: 256px;
    height: 24px;
    box-sizing: border-box;
    margin-left: 7px;
    border: 1px solid #d9d9d9;
    display: flex;
    align-items: center;
    gap: 8px;
    padding: 0 5px 0 4px;
    flex: none;
  }
  .tools {
    letter-spacing: 0.3px;
  }
  .dir {
    letter-spacing: -0.6px;
  }
  .gray {
    color: #888;
  }
  .sepch {
    margin: 0 1px 0 3px;
  }
  .reload {
    width: 21px;
    height: 24px;
    box-sizing: border-box;
    border: 1px solid #d9d9d9;
    border-left: 0;
    display: flex;
    align-items: center;
    justify-content: center;
    flex: none;
  }
  .search {
    width: 202px;
    height: 24px;
    box-sizing: border-box;
    margin-left: 12px;
    border: 1px solid #d9d9d9;
    display: flex;
    align-items: center;
    padding: 0 6px 0 8px;
    color: #666;
    flex: none;
    letter-spacing: -0.1px;
  }
  .search svg {
    margin-left: auto;
  }
  .otools {
    height: 32px;
    flex: none;
    box-sizing: border-box;
    background: #f5f5f5;
    border-bottom: 1px solid #e6e6e6;
    display: flex;
    align-items: center;
    padding: 0 15px 0 18px;
  }
  .org {
    color: #1d3a6a;
    margin-right: 5px;
  }
  .newf {
    color: #1d3a6a;
    margin-left: 30px;
  }
  .caret.v {
    margin: 0 22px 0 9px;
  }
  .pane {
    margin-right: 20px;
  }
  .panes {
    height: 191px;
    flex: none;
    display: flex;
    overflow: hidden;
  }
  .places {
    width: 140px;
    flex: none;
  }
  .place {
    height: 24px;
    display: flex;
    align-items: center;
    padding-left: 32px;
    gap: 5px;
    letter-spacing: -0.2px;
  }
  .place.on {
    background: #dcdadc;
  }
  .vscroll {
    width: 16px;
    flex: none;
    background: #f5f2f6;
    display: flex;
    flex-direction: column;
    align-items: center;
    padding-top: 8px;
    box-sizing: border-box;
  }
  .vthumb {
    width: 100%;
    height: 55px;
    margin: 90px 0 21px;
    background: #c9c9c9;
    flex: none;
  }
  .files {
    flex: 1;
    min-width: 0;
    margin-left: 2px;
    display: flex;
    flex-direction: column;
  }
  .fhead {
    height: 27px;
    flex: none;
    display: flex;
    color: #3f5a78;
    align-items: center;
    position: relative;
  }
  .fname {
    width: 273px;
    box-sizing: border-box;
    padding-left: 19px;
    flex: none;
    display: flex;
    align-items: center;
  }
  .sort2 {
    position: absolute;
    left: 139px;
    top: 0;
  }
  .fdate {
    width: 120px;
    flex: none;
    box-sizing: border-box;
    padding-left: 7px;
    border-left: 1px solid #e6e6e6;
    height: 100%;
    display: flex;
    align-items: center;
  }
  .ftype {
    flex: 1;
    box-sizing: border-box;
    padding-left: 6px;
    border-left: 1px solid #e6e6e6;
    height: 100%;
    display: flex;
    align-items: center;
    overflow: hidden;
    white-space: nowrap;
  }
  .frow {
    margin-top: 5px;
    height: 24px;
    flex: none;
    display: flex;
    align-items: center;
  }
  .frow .fname {
    padding-left: 21px;
  }
  .pfx {
    letter-spacing: -0.3px;
  }
  .val {
    border-left-color: transparent;
    color: #666;
  }
  .fdate.val {
    letter-spacing: -0.4px;
    padding-left: 6px;
  }
  .fscroll {
    margin-left: 2px;
  }
  .obottom {
    position: relative;
    flex: 1;
    background: #f5f2f6;
    padding-top: 11px;
    box-sizing: border-box;
  }
  .oline {
    display: flex;
    align-items: center;
  }
  .fnlabel {
    width: 192px;
    flex: none;
    box-sizing: border-box;
    text-align: right;
    padding-right: 4px;
    letter-spacing: -0.2px;
  }
  .fninp {
    width: 200px;
    height: 26px;
    box-sizing: border-box;
    border: 1px solid #7a7a7a;
    background: #fff;
    display: flex;
    align-items: center;
    justify-content: flex-end;
    padding-right: 4px;
    flex: none;
  }
  .ftsel {
    width: 188px;
    height: 26px;
    box-sizing: border-box;
    margin-left: 12px;
    border: 1px solid #adadad;
    background: #e6e3e7;
    display: flex;
    align-items: center;
    justify-content: space-between;
    padding: 0 4px 0 3px;
    flex: none;
  }
  .btnline {
    margin-top: 6px;
    padding-left: 405px;
    gap: 14px;
  }
  .obtn {
    width: 86px;
    height: 24px;
    box-sizing: border-box;
    border: 1px solid #adadad;
    background: #e6e3e7;
    display: flex;
    align-items: center;
    justify-content: center;
    flex: none;
  }
  .obtn.primary {
    border: 2px solid #0078d7;
  }
  .grip {
    position: absolute;
    right: 1px;
    bottom: 0;
  }

  .arrows {
    position: absolute;
    left: 0;
    top: 0;
    pointer-events: none;
  }
  .arrows path {
    fill: #f73838;
  }
  .redbox {
    position: absolute;
    box-sizing: border-box;
    border: 3px solid #f33a3a;
  }
  .r1 {
    left: 1062px;
    top: 123px;
    width: 61px;
    height: 27px;
  }
  .r2 {
    left: 750px;
    top: 330px;
    width: 42px;
    height: 42px;
  }
  .r3 {
    left: 983px;
    top: 501px;
    width: 182px;
    height: 41px;
  }
  .r4 {
    left: 1212px;
    top: 707px;
    width: 102px;
    height: 34px;
  }
  .mark {
    position: absolute;
    left: 1195px;
    top: 869px;
    font: 19.500px/28px "Liberation Sans", "Noto Sans CJK SC", sans-serif;
    color: rgba(120, 120, 120, 0.75);
    white-space: nowrap;
  }
  .csdn {
    font-size: 17px;
  }
</style>
